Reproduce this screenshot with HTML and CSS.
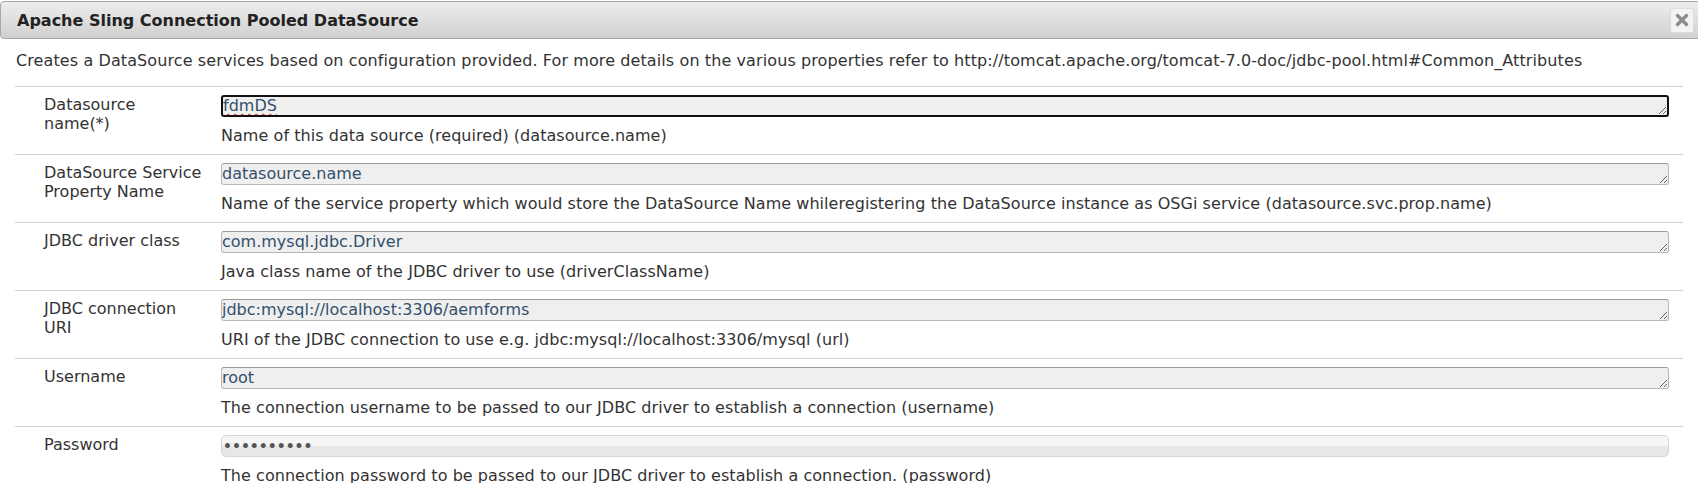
FILE: index.html
```html
<!DOCTYPE html>
<html>
<head>
<meta charset="utf-8">
<title>Apache Sling Connection Pooled DataSource</title>
<link rel="stylesheet" href="styles.css">
</head>
<body>
<div class="dialog">
  <div class="titlebar">
    <span class="title">Apache Sling Connection Pooled DataSource</span>
    <span class="close"><svg width="16" height="16" viewBox="0 0 16 16"><path d="M3.5 3.5 L12.5 12.5 M12.5 3.5 L3.5 12.5" stroke="#8c8c8c" stroke-width="3.4" stroke-linecap="round"/></svg></span>
  </div>
  <div class="content">
    <p class="intro">Creates a DataSource services based on configuration provided. For more details on the various properties refer to http://tomcat.apache.org/tomcat-7.0-doc/jdbc-pool.html#Common_Attributes</p>
    <div class="props">
      <div class="row">
        <div class="label">Datasource name(*)</div>
        <div class="field">
          <div class="ta focused"><span class="misspelt">fdmDS</span></div>
          <div class="desc">Name of this data source (required) (datasource.name)</div>
        </div>
      </div>
      <div class="row">
        <div class="label">DataSource Service Property Name</div>
        <div class="field">
          <div class="ta">datasource.name</div>
          <div class="desc">Name of the service property which would store the DataSource Name whileregistering the DataSource instance as OSGi service (datasource.svc.prop.name)</div>
        </div>
      </div>
      <div class="row">
        <div class="label">JDBC driver class</div>
        <div class="field">
          <div class="ta">com.mysql.jdbc.Driver</div>
          <div class="desc">Java class name of the JDBC driver to use (driverClassName)</div>
        </div>
      </div>
      <div class="row">
        <div class="label">JDBC connection URI</div>
        <div class="field">
          <div class="ta">jdbc:mysql://localhost:3306/aemforms</div>
          <div class="desc">URI of the JDBC connection to use e.g. jdbc:mysql://localhost:3306/mysql (url)</div>
        </div>
      </div>
      <div class="row">
        <div class="label">Username</div>
        <div class="field">
          <div class="ta">root</div>
          <div class="desc">The connection username to be passed to our JDBC driver to establish a connection (username)</div>
        </div>
      </div>
      <div class="row">
        <div class="label">Password</div>
        <div class="field">
          <div class="pw">&#8226;&#8226;&#8226;&#8226;&#8226;&#8226;&#8226;&#8226;&#8226;&#8226;</div>
          <div class="desc">The connection password to be passed to our JDBC driver to establish a connection. (password)</div>
        </div>
      </div>
    </div>
  </div>
</div>
</body>
</html>
```
FILE: styles.css
```css
html, body {
  margin: 0;
  padding: 0;
  background: #fff;
  overflow: hidden;
}
body {
  font-family: "DejaVu Sans", Verdana, sans-serif;
  font-size: 16px;
  color: #333;
}
.dialog {
  width: 1712px;
  padding-top: 1px;
}
.titlebar {
  box-sizing: border-box;
  height: 38px;
  display: flex;
  align-items: center;
  padding: 0 17px 0 16px;
  border: 1px solid #a8a8a8;
  border-radius: 4px;
  background: linear-gradient(#ededed, #d0d0d0);
}
.title {
  font-weight: bold;
  font-size: 16px;
  color: #222;
}
.close {
  margin-left: auto;
  box-sizing: border-box;
  width: 24px;
  height: 25px;
  display: flex;
  align-items: center;
  justify-content: center;
  background: #f3f3f3;
  border: 1px solid #dcdcdc;
  border-radius: 3px;
}
.content {
  margin-left: 15px;
  width: 1668px;
}
.intro {
  margin: 0;
  padding: 12px 0 16px 1px;
  line-height: 19px;
  letter-spacing: 0.1px;
  white-space: nowrap;
}
.row {
  display: grid;
  grid-template-columns: 206px 1fr;
  height: 68px;
  box-sizing: border-box;
  border-top: 1px solid #d2d2d2;
}
.label {
  padding: 8px 17px 0 29px;
  line-height: 19px;
}
.field {
  padding: 8px 14px 0 0;
  display: flex;
  flex-direction: column;
}
.ta {
  box-sizing: border-box;
  height: 22px;
  background: #efefef;
  border: 1px solid #b8b8b8;
  border-top-color: #9a9a9a;
  border-radius: 3px;
  line-height: 20px;
  color: #33506c;
  padding: 0;
  overflow: hidden;
  resize: vertical;
  white-space: nowrap;
}
.ta.focused {
  border: 2px solid #111;
  line-height: 18px;
}
.misspelt {
  text-decoration: underline wavy #e02020;
  text-decoration-thickness: 1px;
  text-underline-offset: 2px;
}
.pw {
  box-sizing: border-box;
  height: 22px;
  border: 1px solid #d6d6d6;
  border-radius: 5px;
  background: linear-gradient(#f5f5f5 50%, #e7e7e7 50%);
  color: #555;
  line-height: 20px;
  padding-left: 1px;
  font-size: 14px;
  font-weight: bold;
}
.desc {
  margin-top: 9px;
  line-height: 19px;
  letter-spacing: 0.05px;
  white-space: nowrap;
}
```
